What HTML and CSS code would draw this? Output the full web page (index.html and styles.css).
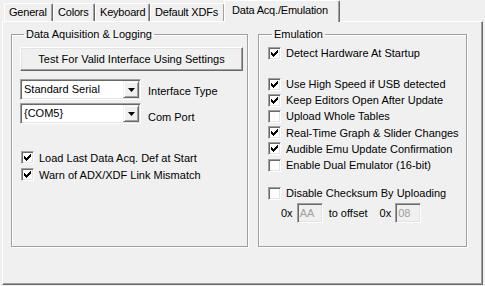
FILE: index.html
```html
<!DOCTYPE html>
<html>
<head>
<meta charset="utf-8">
<link rel="stylesheet" href="styles.css">
</head>
<body>
<div class="dlg">
  <div class="tabs">
    <div class="tab t-general">General</div>
    <div class="tab t-colors">Colors</div>
    <div class="tab t-keyboard">Keyboard</div>
    <div class="tab t-xdfs">Default XDFs</div>
    <div class="tab active t-data">Data Acq./Emulation</div>
  </div>
  <div class="panel">
    <div class="groups">
      <fieldset class="group group-left">
        <legend>Data Aquisition &amp; Logging</legend>
        <button class="btn">Test For Valid Interface Using Settings</button>
        <div class="combo-row first">
          <div class="combo"><span class="val">Standard Serial</span><span class="arrow"><svg width="7" height="4" viewBox="0 0 7 4"><path d="M0 0h7L3.5 4z" fill="#000"/></svg></span></div>
          <span class="lbl lbl-1">Interface Type</span>
        </div>
        <div class="combo-row">
          <div class="combo"><span class="val">{COM5}</span><span class="arrow"><svg width="7" height="4" viewBox="0 0 7 4"><path d="M0 0h7L3.5 4z" fill="#000"/></svg></span></div>
          <span class="lbl lbl-2">Com Port</span>
        </div>
        <div class="checks checks-left">
          <div class="chk-row tall"><span class="box on"></span><span>Load Last Data Acq. Def at Start</span></div>
          <div class="chk-row tall"><span class="box on"></span><span>Warn of ADX/XDF Link Mismatch</span></div>
        </div>
      </fieldset>
      <fieldset class="group group-right">
        <legend>Emulation</legend>
        <div class="chk-row first-row"><span class="box on"></span><span>Detect Hardware At Startup</span></div>
        <div class="chk-block">
          <div class="chk-row"><span class="box on"></span><span>Use High Speed if USB detected</span></div>
          <div class="chk-row"><span class="box on"></span><span>Keep Editors Open After Update</span></div>
          <div class="chk-row"><span class="box"></span><span>Upload Whole Tables</span></div>
          <div class="chk-row"><span class="box on"></span><span>Real-Time Graph &amp; Slider Changes</span></div>
          <div class="chk-row"><span class="box on"></span><span>Audible Emu Update Confirmation</span></div>
          <div class="chk-row"><span class="box"></span><span>Enable Dual Emulator (16-bit)</span></div>
        </div>
        <div class="chk-row sep-row"><span class="box"></span><span>Disable Checksum By Uploading</span></div>
        <div class="hex-row">
          <span>0x</span><span class="edit">AA</span>
          <span class="to">to offset</span>
          <span>0x</span><span class="edit">08</span>
        </div>
      </fieldset>
    </div>
  </div>
</div>
</body>
</html>
```
FILE: styles.css
```css
html, body {
  margin: 0;
  padding: 0;
  background: #f0f0f0;
}
body {
  width: 485px;
  height: 286px;
  overflow: hidden;
  font-family: "Liberation Sans", Arial, sans-serif;
  font-size: 11px;
  color: #000;
}
.dlg {
  display: flex;
  flex-direction: column;
  width: 485px;
  height: 286px;
}
.tabs {
  display: flex;
  align-items: flex-end;
  height: 21px;
  padding-left: 4px;
  position: relative;
  z-index: 1;
}
.tab {
  box-sizing: border-box;
  height: 18px;
  line-height: 16px;
  padding: 0 0 0 4px;
  letter-spacing: -0.2px;
  border-top: 1px solid #fff;
  border-left: 1px solid #fff;
  border-right: 1px solid #696969;
  box-shadow: inset -1px 0 #a0a0a0;
  border-radius: 2px 2px 0 0;
  white-space: nowrap;
  overflow: hidden;
  background: #f0f0f0;
  flex: none;
}
.t-general { width: 49px; }
.t-colors { width: 42px; }
.t-keyboard { width: 55px; }
.t-xdfs { width: 75px; }
.tab.active {
  width: 116px;
  height: 22px;
  margin: 0 -2px -1px -1px;
  padding-left: 7px;
  line-height: 19px;
}
.panel {
  box-sizing: border-box;
  margin-left: 2px;
  width: 481px;
  height: 264px;
  border-top: 1px solid #fff;
  border-left: 1px solid #fff;
  border-right: 1px solid #696969;
  border-bottom: 1px solid #696969;
  box-shadow: inset -1px -1px #a0a0a0;
  padding: 6px 0 0 8px;
}
.groups {
  display: flex;
  gap: 10px;
}
.group {
  box-sizing: border-box;
  margin: 0;
  height: 219px;
  min-width: 0;
  border: 1px solid #a0a0a0;
  box-shadow: inset 1px 1px #fff, 1px 1px #fff;
  padding: 0 4px 0 8px;
  display: flex;
  flex-direction: column;
  align-items: flex-start;
}
.group legend {
  padding: 0 2px;
  margin-left: 4px;
  line-height: 13px;
}
.group-left {
  width: 237px;
}
.group-right {
  width: 209px;
  padding-left: 9px;
}
.btn {
  box-sizing: border-box;
  margin: 6px 0 0 0;
  width: 223px;
  height: 24px;
  font: inherit;
  color: #000;
  background: #f0f0f0;
  border: 1px solid;
  border-color: #fff #696969 #696969 #fff;
  box-shadow: inset -1px -1px #a0a0a0, inset 1px 1px #e3e3e3;
  padding: 0 0 1px 0;
}
.combo-row {
  display: flex;
  align-items: flex-start;
  margin-top: 3px;
}
.combo-row.first {
  margin-top: 8px;
}
.combo {
  box-sizing: border-box;
  width: 121px;
  height: 21px;
  background: #fff;
  border: 1px solid;
  border-color: #a0a0a0 #fff #fff #a0a0a0;
  box-shadow: inset 1px 1px #696969, inset -1px -1px #e3e3e3;
  display: flex;
  align-items: center;
  padding: 0 1px 0 3px;
}
.val {
  flex: 1;
  line-height: 13px;
}
.arrow {
  box-sizing: border-box;
  width: 16px;
  height: 17px;
  background: #f0f0f0;
  border: 1px solid;
  border-color: #f0f0f0 #696969 #696969 #f0f0f0;
  box-shadow: inset 1px 1px #fff, inset -1px -1px #a0a0a0;
  display: flex;
  align-items: center;
  justify-content: center;
}
.arrow svg {
  display: block;
}
.lbl {
  margin-left: 7px;
  line-height: 13px;
}
.lbl-1 {
  margin-top: 6px;
}
.lbl-2 {
  margin-top: 8px;
}
.checks-left {
  margin-top: 25px;
  margin-left: 1px;
}
.chk-row {
  display: flex;
  align-items: center;
  height: 16.2px;
  white-space: nowrap;
}
.chk-row.tall {
  height: 17px;
}
.chk-row.first-row {
  margin-top: 4px;
  height: 16px;
}
.chk-block {
  margin-top: 15px;
}
.sep-row {
  margin-top: 12px;
}
.box {
  box-sizing: border-box;
  width: 13px;
  height: 13px;
  margin-right: 5px;
  flex: none;
  background: #fff;
  border: 1px solid;
  border-color: #a0a0a0 #fff #fff #a0a0a0;
  box-shadow: inset 1px 1px #696969, inset -1px -1px #e3e3e3;
}
.box.on {
  background: #fff url("data:image/svg+xml;utf8,<svg xmlns='http://www.w3.org/2000/svg' width='11' height='11' shape-rendering='crispEdges'><path d='M8 2h1v1h-1z M7 3h2v1h-2z M2 4h1v1h-1z M6 4h3v1h-3z M2 5h2v1h-2z M5 5h3v1h-3z M2 6h5v1h-5z M3 7h3v1h-3z M4 8h1v1h-1z' fill='black'/></svg>") no-repeat 0 0;
}
.hex-row {
  display: flex;
  align-items: center;
  margin-top: 2px;
  margin-left: 13px;
}
.edit {
  box-sizing: border-box;
  width: 26px;
  height: 20px;
  margin-left: 4px;
  padding: 0 2px;
  line-height: 18px;
  color: #a0a0a0;
  background: #f0f0f0;
  border: 1px solid;
  border-color: #a0a0a0 #fff #fff #a0a0a0;
  box-shadow: inset 1px 1px #696969, inset -1px -1px #e3e3e3;
}
.to {
  margin: 0 12px 0 6px;
}
```
